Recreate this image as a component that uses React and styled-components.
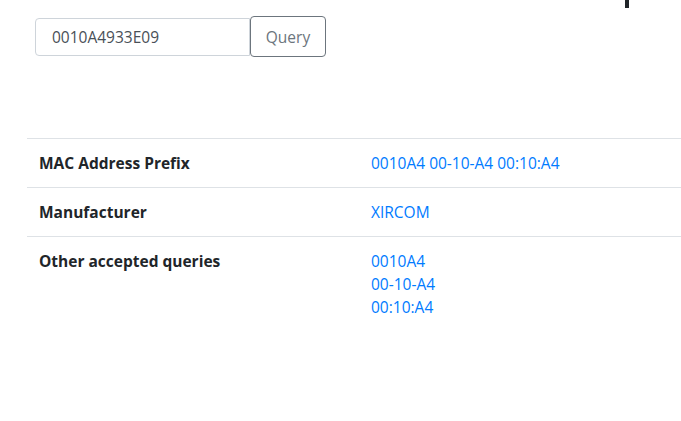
import styled, { createGlobalStyle } from "styled-components";

const Global = createGlobalStyle`
  html, body {
    margin: 0;
    padding: 0;
    background: #ffffff;
    overflow: hidden;
  }
  body {
    font-family: "Open Sans", "Noto Sans", sans-serif;
    font-size: 15.5px;
    color: #212529;
  }
`;

const Page = styled.div`
  width: 681px;
  height: 421px;
  overflow: hidden;
  display: flex;
  flex-direction: column;
`;

const TopEdge = styled.div`
  display: flex;
  justify-content: flex-end;
  padding-right: 52px;
  height: 0;
  overflow: visible;
`;

const Cut = styled.span`
  display: block;
  width: 4px;
  height: 8px;
  background: #212529;
`;

const Search = styled.form`
  display: flex;
  align-items: center;
  margin: 16px 0 0 35px;
`;

const Field = styled.input`
  box-sizing: border-box;
  width: 215px;
  height: 38px;
  padding: 0 16px;
  border: 1px solid #ced4da;
  border-radius: 4px 0 0 4px;
  font: inherit;
  color: #495057;
  outline: none;
`;

const Button = styled.button`
  box-sizing: border-box;
  width: 76px;
  height: 41px;
  border: 1px solid #6c757d;
  border-radius: 4px;
  background: #ffffff;
  color: #6c757d;
  font: inherit;
  padding: 0;
`;

const Table = styled.table`
  margin: 81px 0 0 27px;
  width: 680px;
  flex: none;
  border-collapse: collapse;
`;

const Row = styled.tr`
  border-top: 1px solid #dee2e6;
`;

const Head = styled.th`
  width: 308px;
  padding: 12px;
  text-align: left;
  vertical-align: top;
  font-weight: 700;
  line-height: 24px;
`;

const Cell = styled.td`
  padding: 12px;
  vertical-align: top;
  line-height: 24px;
  color: #007bff;
`;

const Line = styled.div`
  line-height: 23px;
  &:first-child {
    margin-top: 1px;
  }
`;

export default function App() {
  return (
    <Page>
      <Global />
      <TopEdge>
        <Cut />
      </TopEdge>
      <Search onSubmit={(e) => e.preventDefault()}>
        <Field defaultValue="0010A4933E09" />
        <Button type="submit">Query</Button>
      </Search>
      <Table>
        <tbody>
          <Row>
            <Head>MAC Address Prefix</Head>
            <Cell>0010A4 00-10-A4 00:10:A4</Cell>
          </Row>
          <Row>
            <Head>Manufacturer</Head>
            <Cell>XIRCOM</Cell>
          </Row>
          <Row>
            <Head>Other accepted queries</Head>
            <Cell>
              <Line>0010A4</Line>
              <Line>00-10-A4</Line>
              <Line>00:10:A4</Line>
            </Cell>
          </Row>
        </tbody>
      </Table>
    </Page>
  );
}
